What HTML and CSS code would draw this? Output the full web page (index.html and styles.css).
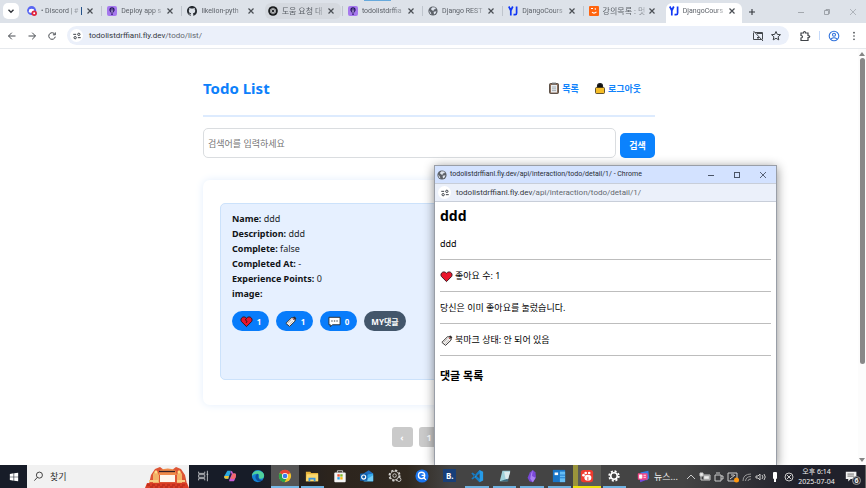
FILE: index.html
```html
<!DOCTYPE html>
<html lang="ko">
<head>
<meta charset="utf-8">
<title>Todo List</title>
<link rel="stylesheet" href="styles.css">
</head>
<body>
<svg class="sprite" aria-hidden="true">
  <symbol id="close" viewBox="0 0 10 10"><path d="M2.500 2.500l5 5M7.500 2.500l-5 5" fill="none" stroke="currentColor" stroke-width="1.200"/></symbol>
  <symbol id="purple" viewBox="0 0 10 10"><rect width="10" height="10" rx="2" fill="#a678ee"/><path d="M5 1.200a2.700 2.700 0 0 0-2.600 2.700C2.400 5.300 4 6.400 4.500 7.200h1C6 6.400 7.600 5.300 7.600 3.900A2.700 2.700 0 0 0 5 1.200z" fill="#24135f"/><path d="M5 2v5M4 3.500l.6 3M6 3.500l-.6 3" stroke="#d9c4ff" stroke-width=".5"/><rect x="4.200" y="7.600" width="1.600" height="1.200" fill="#24135f"/></symbol>
  <symbol id="yj" viewBox="0 0 10 10"><path d="M.8 .5L2.800 4.500V9.500M4.800 .5L2.800 4.500M8.600 .5v6.500q0 1.700-1.500 1.700H5.500" fill="none" stroke="#1238f5" stroke-width="1.700"/></symbol>
  <symbol id="globe" viewBox="0 0 10 10"><circle cx="5" cy="5" r="4.600" fill="#5c6168"/><path d="M1.200 4.400Q3 6 3.500 8.600L2 7.500zM4.500 1.200l2.600.4.800 1.500-2 .5-.2 1.200-1.500-.3-1.400-1.400zM5.600 5.800l2.800-.5-.7 2-1.700 1.200z" fill="#dfe5ee"/></symbol>
  <symbol id="tune" viewBox="0 0 12 12"><path d="M1.500 4h3.500M7 8h3.500" stroke="#3f444a" stroke-width="1.200"/><circle cx="8.200" cy="4" r="1.400" fill="none" stroke="#3f444a" stroke-width="1.200"/><circle cx="3.800" cy="8" r="1.400" fill="none" stroke="#3f444a" stroke-width="1.200"/></symbol>
  <symbol id="bookmark" viewBox="0 0 14 14"><path d="M2 9L8 3l3.500.2L12 6.500 6 12.300z" fill="#f3f0ed" stroke="#302d2d"/><path d="M4 9l4-4M5.500 10.500l4-4" stroke="#b8b5b5"/><path d="M9.500 2.500l1.800-1 2 2-1 1.500z" fill="#302d2d"/><circle cx="10.300" cy="4.700" r=".8" fill="#b23b35"/></symbol>
</svg>

<header class="tabstrip">
  <button class="tab-search" aria-label="탭 검색"><svg viewBox="0 0 10 10"><path d="M2.500 3.800L5 6.300l2.500-2.500" fill="none" stroke="#30343a" stroke-width="1.400"/></svg></button>
  <nav class="tabs">
    <div class="tab"><svg viewBox="0 0 10 10"><circle cx="4.600" cy="4.600" r="4.500" fill="#5865f2"/><path d="M2.300 3.200q2.300-1 4.600 0l.6 2.800-1.500.8H3.200L1.700 6z" fill="#fff"/><circle cx="7.200" cy="7.200" r="2.700" fill="#e0243c"/><circle cx="7.200" cy="7.200" r="1" fill="#fff"/></svg><span class="title">• Discord | #</span><i class="caret"></i><button aria-label="닫기"><svg><use href="#close"/></svg></button></div>
    <div class="tab sep"><svg><use href="#purple"/></svg><span class="title">Deploy app s</span><button aria-label="닫기"><svg><use href="#close"/></svg></button></div>
    <div class="tab sep"><svg viewBox="0 0 16 16"><path fill="#24292f" d="M8 0C3.580 0 0 3.580 0 8c0 3.540 2.290 6.530 5.470 7.590.4.070.55-.17.55-.38v-1.490c-2.010.37-2.530-.49-2.690-.94-.09-.23-.48-.94-.82-1.130-.28-.15-.68-.52-.01-.53.63-.01 1.080.58 1.230.82.72 1.210 1.870.87 2.330.66.070-.52.280-.87.510-1.070-1.780-.2-3.640-.89-3.640-3.950 0-.87.310-1.590.82-2.150-.08-.2-.36-1.020.08-2.120 0 0 .67-.21 2.200.82a7.700 7.700 0 0 1 4 0c1.530-1.040 2.200-.82 2.200-.82.44 1.100.16 1.920.08 2.120.51.56.82 1.270.82 2.150 0 3.070-1.870 3.750-3.650 3.950.29.250.54.730.54 1.480v2.200c0 .21.150.46.550.38A8 8 0 0 0 16 8c0-4.420-3.580-8-8-8z"/></svg><span class="title">likelion-pyth</span><button aria-label="닫기"><svg><use href="#close"/></svg></button></div>
    <div class="tab hover"><svg viewBox="0 0 10 10"><circle cx="5" cy="5" r="4.800" fill="#16181a"/><g fill="none" stroke="#d8dadd" stroke-width=".6"><ellipse cx="5" cy="5" rx="1.500" ry="3"/><ellipse cx="5" cy="5" rx="1.500" ry="3" transform="rotate(60 5 5)"/><ellipse cx="5" cy="5" rx="1.500" ry="3" transform="rotate(120 5 5)"/></g></svg><span class="title ko">도움 요청 대</span><button aria-label="닫기"><svg><use href="#close"/></svg></button></div>
    <div class="tab sep"><svg><use href="#purple"/></svg><span class="title">todolistdrffia</span><button aria-label="닫기"><svg><use href="#close"/></svg></button></div>
    <div class="tab sep"><svg><use href="#globe"/></svg><span class="title">Django REST</span><button aria-label="닫기"><svg><use href="#close"/></svg></button></div>
    <div class="tab sep"><svg><use href="#yj"/></svg><span class="title">DjangoCours</span><button aria-label="닫기"><svg><use href="#close"/></svg></button></div>
    <div class="tab sep"><svg viewBox="0 0 10 10"><rect width="10" height="10" rx="1" fill="#ff640f"/><path d="M2 2.500h2M6.300 2.200v1.500M3 6.200q2 2 4.500-.3" fill="none" stroke="#fff" stroke-width="1.100"/></svg><span class="title ko">강의목록 : 멋</span><button aria-label="닫기"><svg><use href="#close"/></svg></button></div>
    <div class="tab active"><svg><use href="#yj"/></svg><span class="title">DjangoCours</span><button aria-label="닫기"><svg><use href="#close"/></svg></button></div>
  </nav>
  <button class="new-tab" aria-label="새 탭"><svg viewBox="0 0 10 10"><path d="M5 2v6M2 5h6" stroke="#33373c" stroke-width="1.100"/></svg></button>
  <div class="win-controls">
    <button aria-label="최소화"><svg viewBox="0 0 10 10"><path d="M2 5.500h6" stroke="#a3a8ae"/></svg></button>
    <button aria-label="복원"><svg viewBox="0 0 10 10"><path d="M2.500 3.500h4v4h-4zM4 3.500v-1h3.500v4h-1" fill="none" stroke="#8f949a" stroke-width=".8"/></svg></button>
    <button aria-label="창 닫기"><svg viewBox="0 0 10 10"><path d="M2 2l6 6M8 2L2 8" stroke="#a3a8ae" stroke-width=".8"/></svg></button>
  </div>
  <i class="edge-mark"></i>
</header>

<div class="toolbar">
  <button aria-label="뒤로"><svg viewBox="0 0 10 10"><path d="M8.500 5h-7M4.800 1.700L1.500 5l3.300 3.300" fill="none" stroke="#474b50"/></svg></button>
  <button aria-label="앞으로"><svg viewBox="0 0 10 10"><path d="M1.500 5h7M5.200 1.700L8.500 5 5.200 8.300" fill="none" stroke="#474b50"/></svg></button>
  <button aria-label="새로고침"><svg viewBox="0 0 10 10"><path d="M8 3.500A3.300 3.300 0 1 0 8.300 5.700M8.300 1.400v2.400H5.900" fill="none" stroke="#474b50"/></svg></button>
  <div class="omnibox">
    <span class="site"><svg><use href="#tune"/></svg></span>
    <span class="url">todolistdrffianl.fly.dev<span>/todo/list/</span></span>
    <svg viewBox="0 0 12 12"><path d="M3 2.500h7.500v7M9 9.500H1.500v-7M1.500 1l9.500 10M5 3.500h5.500" fill="none" stroke="#44484d"/><path d="M5 7h2v1.500H5z" fill="#44484d"/></svg>
    <svg viewBox="0 0 12 12"><path d="M6 1.500l1.300 2.900 3.200.3-2.400 2.100.7 3.100L6 8.300 3.200 9.900l.7-3.100-2.400-2.100 3.200-.3z" fill="none" stroke="#3b3f44"/></svg>
  </div>
  <button class="ext" aria-label="확장 프로그램"><svg viewBox="0 0 12 12"><path d="M2 3h2.500q0-1.500 1-1.500t1 1.500H9v2.500q1.800 0 1.800 1T9 7.500V10.500H2V8q1.500 0 1.500-1.200T2 5.500z" fill="none" stroke="#3f4348" stroke-width="1.200"/></svg></button>
  <i class="divider"></i>
  <button class="profile" aria-label="프로필"><svg viewBox="0 0 12 12"><g fill="none" stroke="#3273dc" stroke-width="1.100"><circle cx="6" cy="6" r="4.800"/><circle cx="6" cy="4.800" r="1.500"/><path d="M3 9q3-2.600 6 0"/></g></svg></button>
  <button class="more" aria-label="더보기"><svg viewBox="0 0 12 12" fill="#3f4348"><circle cx="6" cy="2" r="1"/><circle cx="6" cy="6" r="1"/><circle cx="6" cy="10" r="1"/></svg></button>
</div>

<div class="viewport">
  <main class="page">
    <header class="page-head">
      <h1>Todo List</h1>
      <nav>
        <a href="#"><svg viewBox="0 0 12 12"><rect x="1.500" y="1.500" width="9" height="10" rx="1" fill="#8c6d58" stroke="#43372f" stroke-width=".8"/><path d="M3 3h6v7.500H3z" fill="#e9edf0"/><path d="M4 5h4M4 6.800h4M4 8.600h4" stroke="#8e959b" stroke-width=".7"/><rect x="4" y=".6" width="4" height="2" fill="#777"/></svg>목록</a>
        <a href="#"><svg viewBox="0 0 12 12"><path d="M3.500 6V4q0-2.500 2.500-2.500T8.500 4v2" fill="#111" stroke="#222" stroke-width="1.200"/><rect x="1.500" y="5.500" width="9" height="6" rx="1" fill="#f6bd27" stroke="#3c3118" stroke-width=".8"/></svg>로그아웃</a>
      </nav>
    </header>
    <form class="search">
      <input type="text" placeholder="검색어를 입력하세요" aria-label="검색어">
      <button type="button">검색</button>
    </form>
    <section class="list">
      <article class="todo">
        <p><b>Name:</b> ddd</p>
        <p><b>Description:</b> ddd</p>
        <p><b>Complete:</b> false</p>
        <p><b>Completed At:</b> -</p>
        <p><b>Experience Points:</b> 0</p>
        <p><b>image:</b></p>
        <div class="actions">
          <button><svg viewBox="0 0 14 14"><path d="M7 12.500L1.500 7C-.5 3.500 4 0 7 3.500 10 0 14.500 3.500 12.500 7z" fill="#e9152b" stroke="#301318"/><path d="M7 3.500L5.800 5.500l1.800 1.300-1 1.700" fill="none" stroke="#301318"/></svg>1</button>
          <button><svg><use href="#bookmark"/></svg>1</button>
          <button><svg viewBox="0 0 14 14"><path d="M1 2.500h12v8H5l-2.500 2v-2H1z" fill="#fff" stroke="#252a30"/><path d="M3.500 6.500h1.500M6.300 6.500h1.500M9 6.500h1.500" stroke="#30353b" stroke-width="1.200"/></svg>0</button>
          <button class="mine">MY댓글</button>
        </div>
      </article>
    </section>
    <nav class="pager"><button>‹</button><button>1</button><button>›</button></nav>
  </main>
  <div class="scrollbar">
    <svg viewBox="0 0 8 8"><path d="M1 6l3-4 3 4z" fill="#858585"/></svg>
    <i></i>
    <svg viewBox="0 0 8 8"><path d="M1 2l3 4 3-4z" fill="#858585"/></svg>
  </div>
  <section class="popup">
    <header class="popup-title">
      <svg><use href="#globe"/></svg><span>todolistdrffianl.fly.dev/api/interaction/todo/detail/1/ - Chrome</span>
      <button aria-label="최소화"><svg viewBox="0 0 10 10"><path d="M2 5.500h6" stroke="#4a5466"/></svg></button>
      <button aria-label="최대화"><svg viewBox="0 0 10 10"><rect x="2.500" y="2.500" width="5" height="5" fill="none" stroke="#4a5466"/></svg></button>
      <button aria-label="창 닫기"><svg viewBox="0 0 10 10"><path d="M2 2l6 6M8 2L2 8" stroke="#4a5466" stroke-width=".9"/></svg></button>
    </header>
    <div class="popup-url"><span class="site"><svg><use href="#tune"/></svg></span><span class="url">todolistdrffianl.fly.dev<span>/api/interaction/todo/detail/1/</span></span></div>
    <div class="popup-body">
      <h2>ddd</h2>
      <p>ddd</p>
      <hr>
      <p><svg viewBox="0 0 14 14"><path d="M7 12.500L1.500 7C-.5 3.500 4 0 7 3.500 10 0 14.500 3.500 12.500 7z" fill="#e9152b" stroke="#301318"/></svg>좋아요 수: 1</p>
      <hr>
      <p>당신은 이미 좋아요를 눌렀습니다.</p>
      <hr>
      <p><svg><use href="#bookmark"/></svg>북마크 상태: 안 되어 있음</p>
      <hr>
      <h3>댓글 목록</h3>
    </div>
  </section>
</div>

<footer class="taskbar">
  <button class="start" aria-label="시작"><svg viewBox="0 0 12 12"><path d="M1 2.300l4.500-.7v4H1zM6.200 1.500L11 .8v4.800H6.200zM1 6.400h4.500v4L1 9.700zM6.200 6.400H11v4.800l-4.800-.7z" fill="#fff"/></svg></button>
  <div class="find">
    <svg viewBox="0 0 12 12"><circle cx="7" cy="4.500" r="3.300" fill="none" stroke="#333"/><path d="M4.700 7L1.500 10.500" stroke="#333"/></svg>
    <span>찾기</span>
    <svg class="art" viewBox="0 0 44 22"><path d="M4 18L6 9l4-6 5-2 4 3h8l4-3 5 2 4 6 2 9z" fill="#dd5434"/><path d="M8 17V8l3-4 3 5v8zM32 17V9l2-5 3 4v9z" fill="#f2b368"/><path d="M15 4q8-3 15 0l2 5H13z" fill="#ef8b4a"/><path d="M14 5.500h16" stroke="#332027" stroke-width="1.300"/><path d="M15 9h15v7H15z" fill="#fff7ed"/><path d="M4 15h9M32 15h8" stroke="#f6cf86" stroke-width="2"/><path d="M0 22l2-5h40l2 5z" fill="#d93c24"/><path d="M2 19h40M5 21h35" stroke="#a82318" stroke-dasharray="3 2"/><circle cx="11" cy="6" r="1.500" fill="#ffdf87"/><circle cx="34" cy="6" r="1.500" fill="#ffdf87"/></svg>
  </div>
  <nav class="apps">
    <button aria-label="작업 보기"><svg viewBox="0 0 16 16"><path d="M3 3v2h7V3M3 13v-2h7v2M3 6.500h7v3H3zM13 2v12M12 6h2" fill="none" stroke="#c8cace"/></svg></button>
    <button aria-label="Copilot"><svg viewBox="0 0 16 16"><path d="M5 2h4L6.500 11H3q-2.500 0-1.500-3z" fill="#2aa9e0"/><path d="M1.500 8h5.200L6 11H3q-2 0-1.500-3z" fill="#f2c230"/><path d="M9 2q2 0 2.500 3H14q1.500 1 .5 4l-1.500 4q-.5 1-2 1H7z" fill="#c85bd6"/><path d="M11 5h3q1.500 1 .5 4l-1 2-5 .5z" fill="#f26a6a"/><path d="M9.500 5l-2.500 6" stroke="#1c2030" stroke-width="1.500"/></svg></button>
    <button aria-label="Edge"><svg viewBox="0 0 16 16"><circle cx="8" cy="8" r="7" fill="#1482d4"/><path d="M1 8C1 0 14 0 15 7q0 4-4 4-2.500 0-2-2 1-3-2-3.500Q3 5.500 1 8z" fill="#4fd19c"/><path d="M7 5.500Q3 9 7 13q3 2.500 6.500-.5-4 .5-5-2.500-.5-2 0-4z" fill="#0c4f9d"/></svg></button>
    <button class="on" aria-label="Chrome"><svg viewBox="0 0 16 16"><circle cx="8" cy="8" r="7" fill="#f5c52e"/><path d="M8 8L1.900 4.500A7 7 0 0 1 14.100 4.500z" fill="#e44335"/><path d="M8 8L1.900 4.500A7 7 0 0 0 7.500 15l3-5.500z" fill="#2ba24c"/><circle cx="8" cy="8" r="3.500" fill="#fff"/><circle cx="8" cy="8" r="2.700" fill="#3a7cec"/></svg></button>
    <button class="run" aria-label="파일 탐색기"><svg viewBox="0 0 16 16"><path d="M1 3h5l1 1.500h8V14H1z" fill="#e8b43b"/><path d="M2 6h13v8H1z" fill="#fbd96f"/><path d="M4 14v-4h8v4h-2v-2H6v2z" fill="#3d95dc"/></svg></button>
    <button aria-label="Store"><svg viewBox="0 0 16 16"><path d="M5 4V2h6v2" fill="none" stroke="#ddd"/><rect x="1.500" y="4" width="13" height="11" rx="1" fill="#f5f5f5"/><path d="M5 6h2.700v2.700H5z" fill="#ef4f2d"/><path d="M8.300 6H11v2.700H8.300z" fill="#7fba27"/><path d="M5 9.300h2.700V12H5z" fill="#2aa4e8"/><path d="M8.300 9.300H11V12H8.300z" fill="#fbb917"/></svg></button>
    <button aria-label="Outlook"><svg viewBox="0 0 16 16"><path d="M4 5l6-3.500L15 5v9H4z" fill="#1e6fc0"/><path d="M4 7l11-2v9H5z" fill="#35a9ea"/><path d="M4 14L15 7v7z" fill="#72cdf6"/><rect x="0" y="5" width="8.500" height="8.500" rx="1" fill="#0f5ca9"/><circle cx="4.200" cy="9.200" r="2.300" fill="none" stroke="#fff" stroke-width="1.300"/></svg></button>
    <button aria-label="설정 도구"><svg viewBox="0 0 16 16"><circle cx="7.500" cy="7.500" r="6" fill="none" stroke="#d4d2cf" stroke-width="1.800" stroke-dasharray="2.500 2.200"/><circle cx="7.500" cy="7.500" r="5" fill="none" stroke="#d4d2cf"/><circle cx="7.500" cy="7.500" r="2" fill="none" stroke="#d4d2cf"/><circle cx="12.500" cy="12" r="2.300" fill="#2b2520" stroke="#d4d2cf"/></svg></button>
    <button aria-label="검색 도우미"><svg viewBox="0 0 16 16"><circle cx="8" cy="8" r="7.500" fill="#1974ef"/><circle cx="7.500" cy="7.300" r="3.600" fill="none" stroke="#fff" stroke-width="1.500"/><path d="M10 10l2.500 2.500M7.500 7.300h4" stroke="#fff" stroke-width="1.400"/></svg></button>
    <button class="letter" aria-label="B 앱"><span>B.</span></button>
    <button class="run" aria-label="VS Code"><svg viewBox="0 0 16 16"><path d="M11 1l4 2v10l-4 2-6-6z" fill="#269be8"/><path d="M1.500 5l1.500-1 8 6.500V15zM1.500 11L3 12l8-6.500V1z" fill="#147dc8"/><path d="M11 5v6L7.500 8z" fill="#404348"/></svg></button>
    <button class="run" aria-label="메모장"><svg viewBox="0 0 16 16"><path d="M5 2h9l-3 12H2z" fill="#9fd2db"/><path d="M7 3h7l-3 10H9z" fill="#dcebed"/><path d="M2 14l9-3 1 3z" fill="#3c6b80"/></svg></button>
    <button class="run" aria-label="Obsidian"><svg viewBox="0 0 16 16"><path d="M9 1l3 3 .5 6-3.500 5-4-1-2-4 2.500-6z" fill="#7a48d8"/><path d="M9 1l-1 7 4 2-3 5-3-4 1-6z" fill="#aa82f2"/></svg></button>
    <button class="run" aria-label="가상 머신"><svg viewBox="0 0 16 16"><rect x="1" y="1" width="14" height="14" fill="#1976c9"/><path d="M9 3h6v12H9z" fill="#65bdf5"/><path d="M3 4h4v3H3z" fill="#fff"/><path d="M9 7h6M9 10h6" stroke="#1976c9"/></svg></button>
    <button class="warn" aria-label="GOM"><svg viewBox="0 0 16 16"><rect x="1" y="1" width="14" height="14" rx="3" fill="#ef3a2e"/><ellipse cx="9" cy="10" rx="4" ry="3.300" fill="#fff"/><circle cx="4" cy="7" r="1.500" fill="#fff"/><circle cx="6.500" cy="4.500" r="1.500" fill="#fff"/><circle cx="10.500" cy="4.500" r="1.500" fill="#fff"/><path d="M9 9v4" stroke="#ef3a2e"/></svg></button>
    <button class="run" aria-label="설정"><svg viewBox="0 0 16 16"><circle cx="8" cy="8" r="5.500" fill="none" stroke="#fff" stroke-width="2" stroke-dasharray="2.300 2.020"/><circle cx="8" cy="8" r="3.700" fill="none" stroke="#fff" stroke-width="1.800"/></svg></button>
  </nav>
  <button class="news"><svg viewBox="0 0 16 16"><path d="M4 3l10-2 1 9-3 3z" fill="#317de8"/><path d="M3 9l9 3-8 3z" fill="#7848dd"/><rect x="1" y="4" width="12" height="8" rx="1" fill="#f34786"/><path d="M3 6h3v4H3zM8 6.500h3M8 9h3" fill="#fff" stroke="#fff"/></svg>뉴스...</button>
  <div class="tray">
    <svg viewBox="0 0 12 12"><path d="M2 8l4-4 4 4"/></svg>
    <svg viewBox="0 0 12 12"><path d="M2 4h9v5H2z"/><path d="M5 5h5v3H5zM1 2h3v3H1z" fill="#eee"/></svg>
    <svg viewBox="0 0 12 12"><path d="M2 4h6v6H2zM8 5h2v3H8M3 2h4"/></svg>
    <svg viewBox="0 0 12 12"><path d="M1 2h9v8H1zM3 8l5-4M4 4h3"/><circle cx="9.500" cy="9" r="2.500" fill="#ff980f" stroke="none"/></svg>
    <svg viewBox="0 0 12 12"><path d="M2 10Q2 3 10 3M4.500 10Q5 5.500 10 5.500M7 10Q7 8 10 8" stroke="#999"/></svg>
    <svg viewBox="0 0 12 12"><path d="M1 5h2l2-2v6L3 7H1zM7 4q2 2 0 4M9 3q2.500 3 0 6"/></svg>
    <svg viewBox="0 0 12 12"><rect x="4" y="1" width="4" height="7" rx="1" fill="#fff" stroke="none"/><path d="M6 8v3" stroke="#fff" stroke-width="2"/></svg>
    <svg viewBox="0 0 12 12"><circle cx="6" cy="6" r="4"/><path d="M4 4l4 4M8 4L4 8"/></svg>
  </div>
  <div class="clock"><span>오후 6:14</span><span>2025-07-04</span></div>
  <button class="notice" aria-label="알림 6개"><svg viewBox="0 0 16 16"><path d="M1 2h13v9H7l-3 3v-3H1z" fill="#f2f2f2"/><path d="M3 5h8M3 7.500h8" stroke="#555"/></svg><b>6</b></button>
</footer>
</body>
</html>
```

FILE: styles.css
```css
* { box-sizing: border-box; }

body {
  margin: 0;
  height: 100vh;
  display: flex;
  flex-direction: column;
  overflow: hidden;
  background: #fff;
  color: #212529;
  font: 9px/15px "Noto Sans", "Noto Sans CJK KR", sans-serif;
}

button {
  margin: 0;
  padding: 0;
  border: 0;
  background: none;
  font: inherit;
  color: inherit;
  display: flex;
  align-items: center;
  justify-content: center;
}

svg { display: block; width: 10px; height: 10px; flex: none; }
h1, h2, h3, p { margin: 0; }
.sprite { position: absolute; width: 0; height: 0; }

/* Tab strip */
.tabstrip {
  position: relative;
  display: flex;
  align-items: stretch;
  height: 23px;
  flex: none;
  padding-left: 3px;
  background: #dde2e9;
}
.tab-search { width: 16px; height: 16px; margin: 3px 3px 0 0; border-radius: 5px; background: #fff; }
.tabs { display: grid; grid-template-columns: repeat(9, 1fr); flex: 0 1 722px; min-width: 0; }
.tab {
  position: relative;
  display: flex;
  align-items: center;
  min-width: 0;
  margin: 3px 2px 4px;
  padding: 0 5px 0 3px;
  border-radius: 6px;
  color: #5d6269;
  font: 7px/15px Roboto, "Noto Sans CJK KR", sans-serif;
}
.tab .title {
  flex: 1;
  min-width: 0;
  margin-left: 4px;
  overflow: hidden;
  white-space: nowrap;
  mask-image: linear-gradient(90deg, #000 70%, #0003);
}
.tab .ko { font-size: 8px; }
.tab button { color: #4a4e54; }
.tab.sep::before { content: ""; position: absolute; left: -3px; top: 3px; width: 1px; height: 10px; background: #bfc5cd; }
.tab.hover { background: #d5d9df; }
.tab.active { margin-bottom: 0; padding-bottom: 4px; border-radius: 6px 6px 0 0; background: #fff; }
.caret { width: 1px; height: 8px; margin-right: 3px; background: #245189; }
.new-tab { width: 16px; }
.win-controls { display: flex; margin-left: auto; }
.win-controls button { width: 26px; }
.edge-mark { position: absolute; left: 42%; top: 0; width: 27px; height: 1px; background: #66a9dc; }

/* Address bar */
.toolbar { display: flex; align-items: center; height: 26px; flex: none; padding: 0 2px; border-bottom: 1px solid #e6e9ed; }
.toolbar > button { width: 20px; height: 20px; }
.toolbar > .ext svg, .toolbar > .profile svg { width: 12px; height: 12px; }
.omnibox {
  display: flex;
  align-items: center;
  gap: 6px;
  flex: 1;
  height: 19px;
  margin: 0 6px 0 5px;
  padding: 0 7px 0 3px;
  border-radius: 10px;
  background: #ebf0fa;
}
.omnibox > svg { width: 12px; height: 12px; }
.site { display: grid; place-items: center; width: 13px; height: 13px; border-radius: 50%; background: #fff; }
.url { flex: 1; color: #34383e; font-family: Roboto, sans-serif; font-size: 8px; white-space: nowrap; }
.url span { color: #62676e; }
.divider { width: 1px; height: 9px; margin: 0 4px; background: #c6dafa; }

/* Page */
.viewport { position: relative; display: flex; flex: 1; min-height: 0; }
.page { width: 452px; max-width: 100%; margin: 0 auto; padding-top: 24px; }
.page-head { display: flex; align-items: center; justify-content: space-between; height: 44px; padding-bottom: 12px; border-bottom: 2px solid #ddebfe; }
h1 { color: #0d80fb; font-size: 15px; line-height: 30px; }
.page-head nav { display: flex; gap: 15px; padding-right: 14px; }
.page-head a { display: flex; align-items: center; gap: 2px; color: #1283fb; font-weight: 700; text-decoration: none; }
.page-head a svg { width: 12px; height: 12px; }
.search { display: flex; align-items: flex-end; gap: 4px; margin-top: 11px; }
.search input {
  flex: 1;
  min-width: 0;
  height: 30px;
  padding: 0 4px;
  border: 1px solid #dadde0;
  border-radius: 5px;
  font: inherit;
  outline: 0;
}
.search input::placeholder { color: #757575; }
.search button { width: 35px; height: 25px; border-radius: 5px; background: #0b82fd; color: #fff; font-weight: 700; }
.list { margin-top: 22px; padding: 23px 17px 25px; border-radius: 7px; box-shadow: 0 0 8px #e3eefc; }
.todo { min-height: 177px; padding: 7px 11px; border: 1px solid #cce2fb; border-radius: 5px; background: #e6f0ff; }
.todo b { color: #111417; }
.actions { display: flex; gap: 7px; margin-top: 10px; }
.actions button { width: 37px; height: 20px; gap: 4px; border-radius: 10px; background: #087cfb; color: #fff; font-weight: 700; font-size: 8px; }
.actions svg { width: 13px; height: 13px; }
.actions .mine { width: 42px; background: #43566b; }
.pager { display: flex; justify-content: center; gap: 6px; margin-top: 22px; }
.pager button { width: 21px; height: 20px; border-radius: 3px; background: #cacaca; color: #fff; font-weight: 700; }

.scrollbar { display: flex; flex-direction: column; align-items: center; width: 8px; padding: 1px 0; background: #fcfcfc; }
.scrollbar svg { width: 8px; height: 8px; }
.scrollbar i { width: 5px; height: 74%; margin-bottom: auto; border-radius: 3px; background: #888; }

/* Detail window */
.popup {
  position: absolute;
  left: calc(50% + 1px);
  top: 116px;
  bottom: 0;
  width: 343px;
  border: 1px solid #999ea7;
  border-bottom: 0;
  background: #fff;
  color: #000;
  box-shadow: 0 2px 10px #0007;
  clip-path: inset(-16px -16px 0);
}
.popup-title { display: flex; align-items: center; height: 17px; padding-left: 2px; background: #d3e2ff; color: #282d36; white-space: nowrap; }
.popup-title span { flex: 1; padding-left: 3px; font-family: Roboto, sans-serif; font-size: 7px; }
.popup-title button { width: 26px; height: 17px; }
.popup-url { display: flex; align-items: center; gap: 5px; height: 19px; padding-left: 3px; border-top: 1px solid #c8ced9; border-bottom: 1px solid #c8ced9; background: #ebf0fa; }
.popup-body { padding: 6px 5px 0; }
.popup-body h2 { margin-bottom: 12px; font-size: 14px; line-height: 16px; }
.popup-body p { display: flex; align-items: center; gap: 2px; line-height: 16px; }
.popup-body p svg { width: 13px; height: 13px; }
.popup-body hr { height: 1px; margin: 7px 0 8px; border: 0; background: #bdbdbd; }
.popup-body h3 { margin-top: 12px; font-size: 11px; line-height: 16px; }

/* Taskbar */
.taskbar {
  display: flex;
  align-items: stretch;
  height: 23px;
  flex: none;
  background: linear-gradient(90deg, #171c28 0 29%, #2c241d 38%, #30281f 47%, #444 52%, #444 79%, #20212b 92%);
  color: #f0f0f0;
}
.start { width: 27px; }
.find { display: flex; align-items: center; gap: 6px; flex: 0 1 162px; padding-left: 6px; background: #f1f1f1; color: #333; }
.find svg { width: 11px; height: 11px; }
.find .art { width: 44px; height: 22px; margin-left: auto; }
.apps { display: grid; grid-template-columns: repeat(16, 1fr); flex: 0 1 439px; }
.apps button { border-bottom: 2px solid transparent; }
.apps svg { width: 14px; height: 14px; }
.apps .run { margin: 0 2px; border-color: #6eb2e1; }
.apps .on { border-color: #76b9e8; background: #555555; }
.apps .warn { border-color: #efe40c; background: linear-gradient(90deg, #9a943b 5px, #5b5b57 5px); }
.letter span { width: 13px; height: 13px; background: #183f78; color: #fff; font-size: 8px; font-weight: 700; line-height: 13px; }
.news { gap: 4px; padding-left: 9px; white-space: nowrap; }
.news svg { width: 13px; height: 13px; }
.tray { display: flex; align-items: center; gap: 2px; margin-left: auto; }
.tray svg { width: 12px; height: 12px; fill: none; stroke: #ccc; stroke-width: 1; }
.clock { display: flex; flex-direction: column; justify-content: center; width: 43px; text-align: center; font-size: 7px; line-height: 10px; white-space: nowrap; }
.notice { position: relative; width: 28px; border-right: 1px solid #666; }
.notice svg { width: 13px; height: 13px; }
.notice b { position: absolute; right: 4px; bottom: 3px; width: 9px; height: 9px; border: 1px solid #999; border-radius: 50%; background: #303139; font-size: 7px; line-height: 7px; }
```
